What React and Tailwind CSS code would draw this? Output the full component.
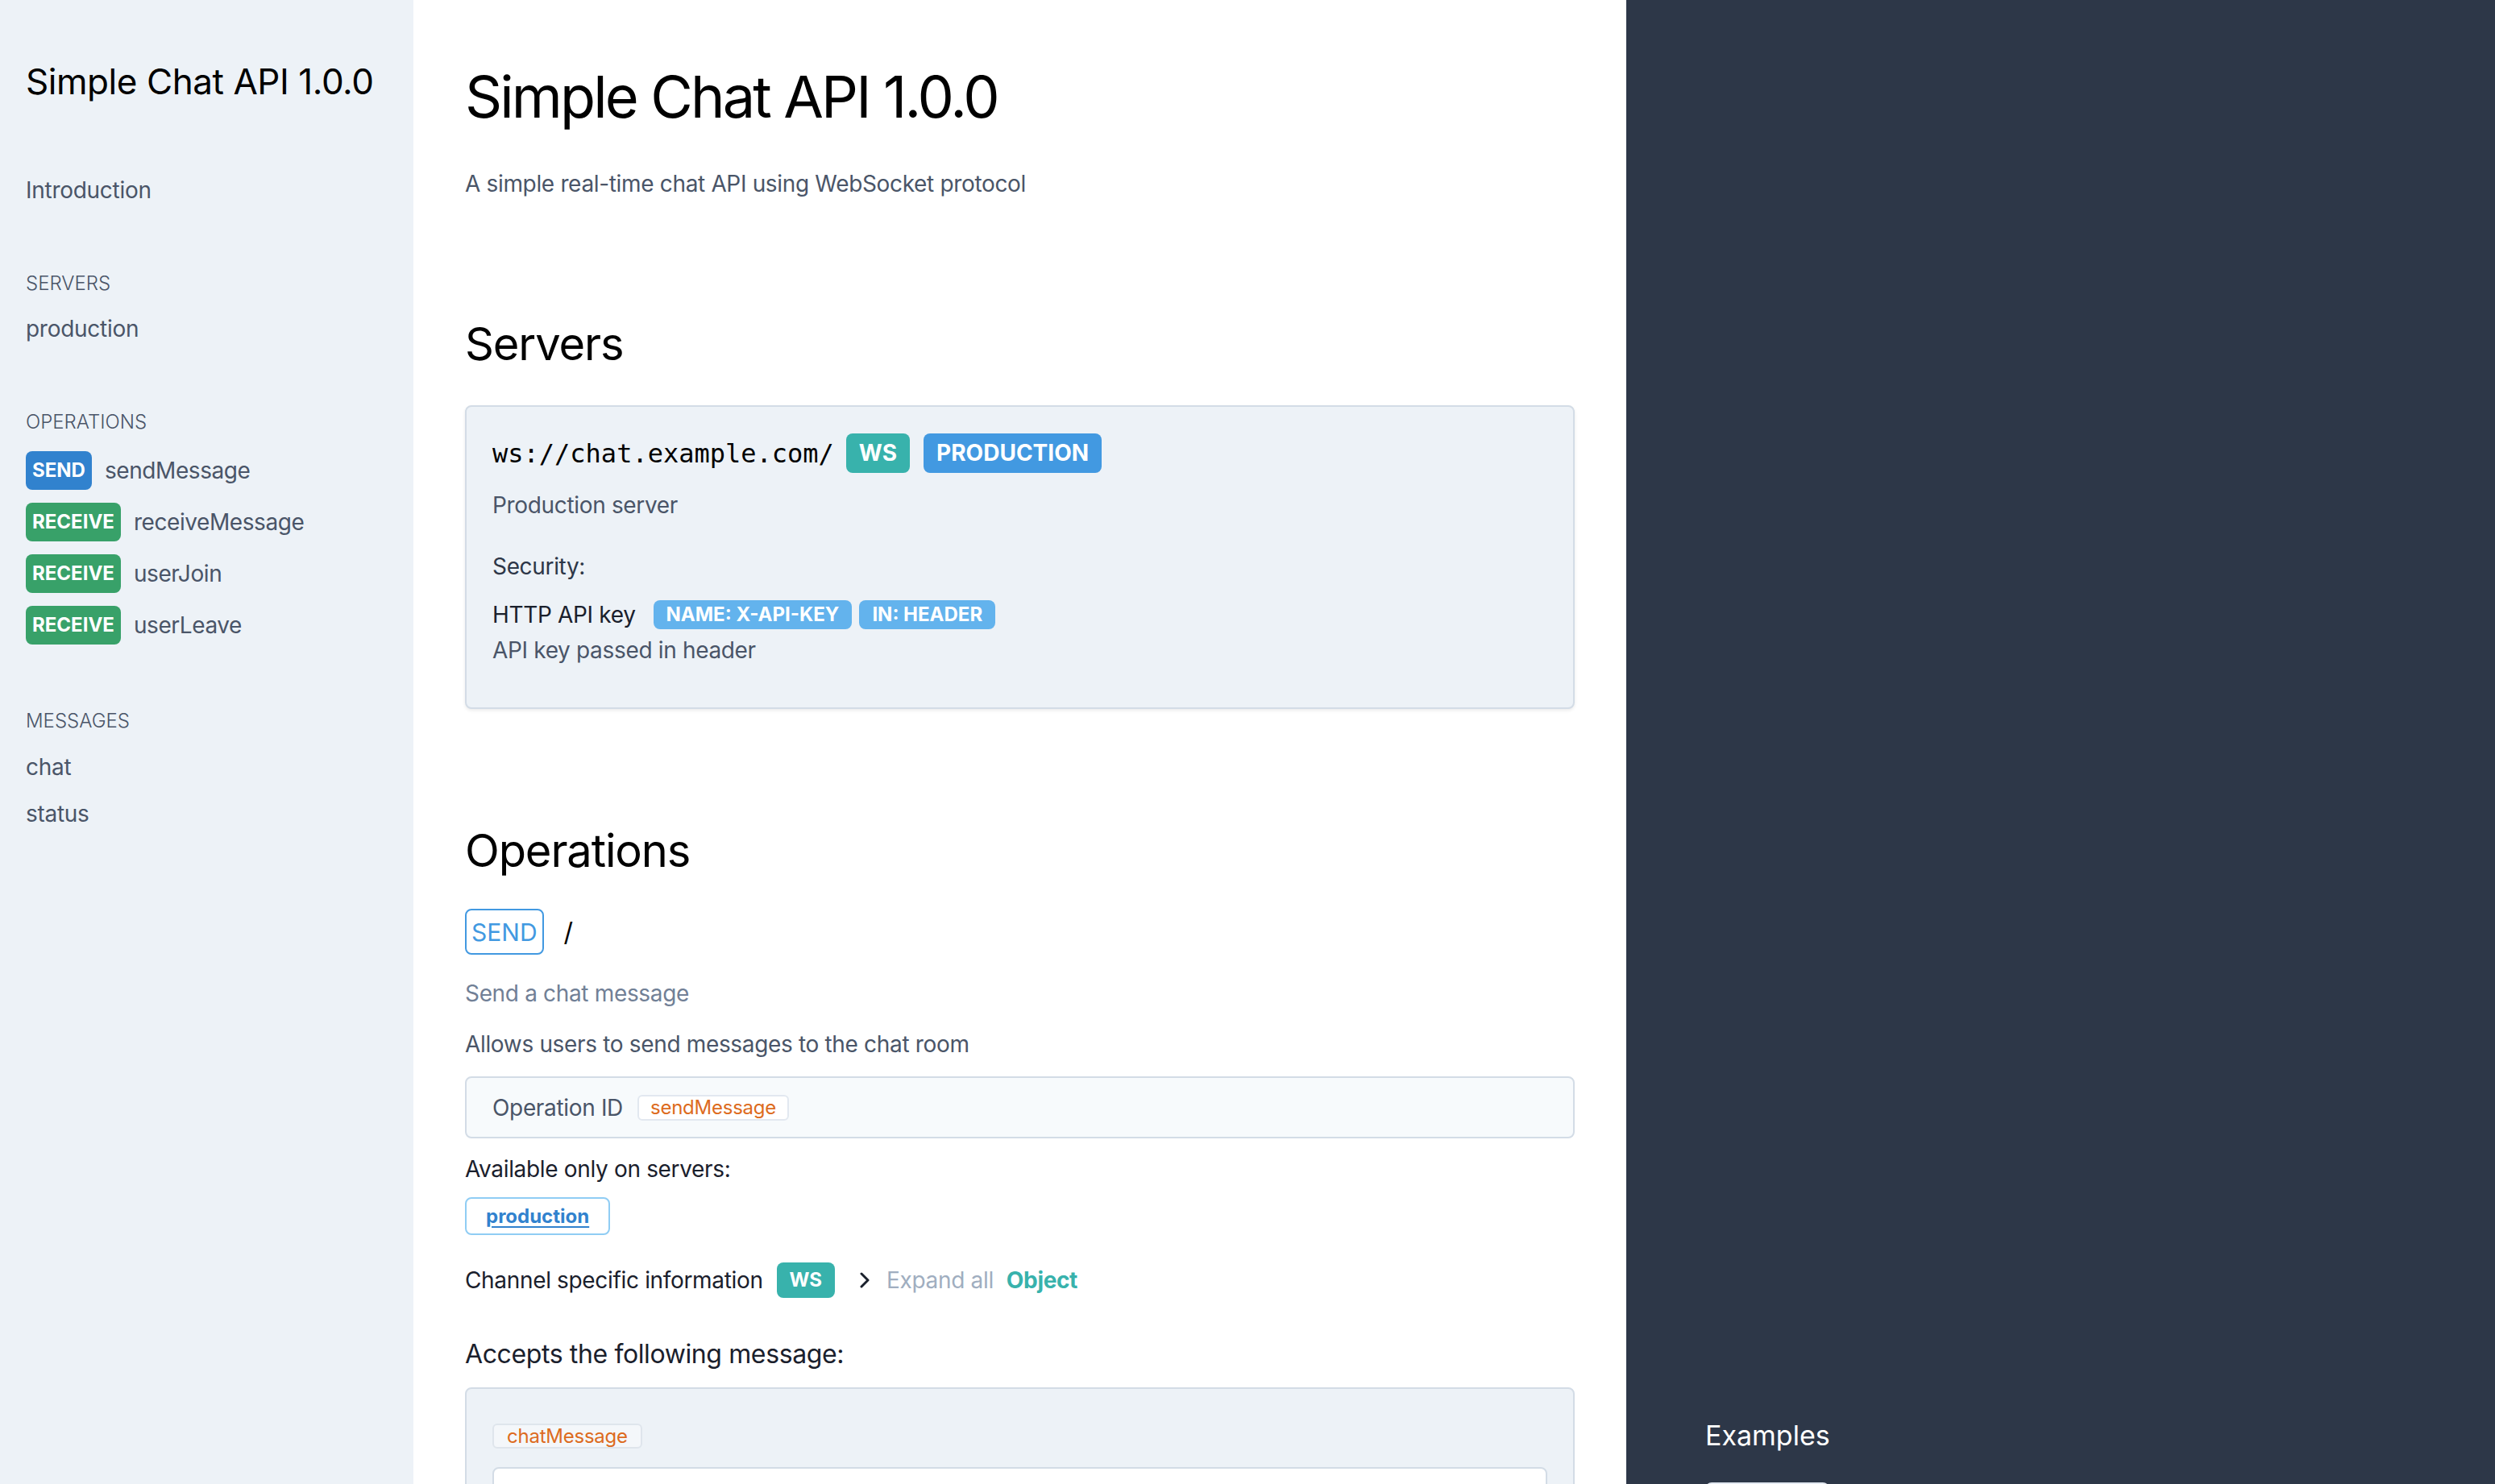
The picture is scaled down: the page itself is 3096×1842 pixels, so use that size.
export default function App() {
  const sideItem = "text-[28px] leading-[40px] tracking-[-0.01em] text-[#4a5568]";
  const sideHead = "text-[24px] leading-[32px] font-light uppercase text-[#4a5568]";
  const ops = [
    { kind: "SEND", name: "sendMessage" },
    { kind: "RECEIVE", name: "receiveMessage" },
    { kind: "RECEIVE", name: "userJoin" },
    { kind: "RECEIVE", name: "userLeave" },
  ];
  const body = "text-[28px] leading-[40px] tracking-[-0.012em]";
  return (
    <div className="flex h-[1842px] w-[3096px] overflow-hidden font-['Inter',sans-serif] antialiased">
      {/* Sidebar */}
      <aside className="w-[513px] shrink-0 bg-[#edf2f7] px-8 pt-[73px]">
        <div className="text-[44px] leading-[56px] tracking-[-0.01em] text-black">Simple Chat API 1.0.0</div>
        <div className={`mt-[87px] ${sideItem}`}>Introduction</div>
        <div className={`mt-[80px] ${sideHead}`}>Servers</div>
        <div className={`mt-[20px] ${sideItem}`}>production</div>
        <div className={`mt-[80px] ${sideHead}`}>Operations</div>
        <ul className="mt-[20px] flex flex-col gap-4">
          {ops.map((o) => (
            <li key={o.name} className="flex h-[48px] items-center">
              <span
                className={`rounded-lg px-2 text-[24px] font-bold leading-[48px] text-white ${
                  o.kind === "SEND" ? "bg-[#3182ce]" : "bg-[#38a169]"
                }`}
              >
                {o.kind}
              </span>
              <span className="ml-4 text-[28px] leading-[40px] tracking-[-0.015em] text-[#4a5568]">{o.name}</span>
            </li>
          ))}
        </ul>
        <div className={`mt-[79px] ${sideHead}`}>Messages</div>
        <div className={`mt-[21px] ${sideItem}`}>chat</div>
        <div className={`mt-[18px] ${sideItem}`}>status</div>
      </aside>

      {/* Main */}
      <main className="w-[1505px] shrink-0 bg-white px-16 pt-[80px]">
        <h1 className="text-[72px] leading-[80px] tracking-[-0.04em] text-black">Simple Chat API 1.0.0</h1>
        <p className={`mt-[48px] ${body} text-[#4a5568]`}>
          A simple real-time chat API using WebSocket protocol
        </p>

        <h2 className="mt-[147px] text-[56px] leading-[64px] tracking-[-0.02em] text-black">Servers</h2>
        <div className="mt-[44px] rounded-lg border-2 border-[#d3dce6] bg-[#edf2f7] px-[32px] pb-[51px] pt-[33px] shadow-[0_2px_4px_rgba(0,0,0,0.08)]">
          <div className="flex items-center">
            <span className="font-['DejaVu_Sans_Mono',monospace] text-[32px] leading-[40px] text-black">
              ws://chat.example.com/
            </span>
            <span className="ml-[15px] rounded-lg bg-[#38b2ac] px-4 py-2 text-[28px] font-bold leading-[33px] text-white">
              WS
            </span>
            <span className="ml-[17px] rounded-lg bg-[#4299e1] px-4 py-2 text-[28px] font-bold leading-[33px] text-white">
              PRODUCTION
            </span>
          </div>
          <div className={`mt-[20px] ${body} text-[#4a5568]`}>Production server</div>
          <div className={`mt-[36px] ${body} text-[#2d3748]`}>Security:</div>
          <div className="mt-[22px] flex h-[36px] items-center">
            <span className="text-[28px] leading-[36px] tracking-[-0.012em] text-[#1a202c]">HTTP API key</span>
            <span className="ml-[22px] rounded-lg bg-[#63b3ed] px-4 text-[24px] font-bold leading-[36px] text-white">
              NAME: X-API-KEY
            </span>
            <span className="ml-[9px] rounded-lg bg-[#63b3ed] px-4 text-[24px] font-bold leading-[36px] text-white">
              IN: HEADER
            </span>
          </div>
          <div className={`mt-[6px] ${body} text-[#4a5568]`}>API key passed in header</div>
        </div>

        <h2 className="mt-[144px] text-[56px] leading-[64px] tracking-[-0.02em] text-black">Operations</h2>
        <div className="mt-[40px] flex h-[57px] items-center">
          <span className="flex h-[57px] items-center rounded-lg border-2 border-[#4299e1] px-[6px] text-[30px] leading-[40px] text-[#4299e1]">
            SEND
          </span>
          <span className="ml-[25px] text-[32px] leading-[40px] text-black">/</span>
        </div>
        <div className={`mt-[28px] ${body} text-[#718096]`}>Send a chat message</div>
        <div className={`mt-[23px] ${body} text-[#4a5568]`}>Allows users to send messages to the chat room</div>
        <div className="mt-[20px] flex h-[77px] items-center rounded-lg border-2 border-[#d3dce6] bg-[#f7fafc] px-[32px]">
          <span className={`${body} text-[#4a5568]`}>Operation ID</span>
          <span className="ml-[18px] rounded-md border-2 border-[#e2e8f0] bg-white px-[14px] text-[24px] leading-[28px] tracking-[-0.01em] text-[#dd6b20]">
            sendMessage
          </span>
        </div>
        <div className={`mt-[18px] ${body} text-[#1a202c]`}>Available only on servers:</div>
        <div className="mt-[15px] flex">
          <span className="rounded-lg border-2 border-[#90cdf4] bg-white px-[24px] py-[5px] text-[24px] font-bold leading-[33px] text-[#3182ce] underline decoration-2 underline-offset-4">
            production
          </span>
        </div>
        <div className="mt-[34px] flex h-[44px] items-center">
          <span className={`${body} text-[#1a202c]`}>Channel specific information</span>
          <span className="ml-[17px] rounded-lg bg-[#38b2ac] px-4 text-[24px] font-bold leading-[44px] text-white">
            WS
          </span>
          <svg className="ml-[30px]" width="14" height="20" viewBox="0 0 14 20" fill="none">
            <path d="M3 2 L11 10 L3 18" stroke="#1a202c" strokeWidth="3" strokeLinecap="round" strokeLinejoin="round" />
          </svg>
          <span className={`ml-[20px] ${body} text-[#a0aec0]`}>Expand all</span>
          <span className={`ml-[16px] ${body} font-bold text-[#38b2ac]`}>Object</span>
        </div>
        <div className="mt-[50px] text-[32px] leading-[40px] tracking-[-0.012em] text-[#1a202c]">
          Accepts the following message:
        </div>
        <div className="mt-[21px] h-[400px] rounded-lg border-2 border-[#d3dce6] bg-[#edf2f7] px-[32px] pt-[43px]">
          <div className="flex">
            <span className="rounded-md border-2 border-[#dfe5ec] bg-[#f4f7fa] px-[16px] text-[24px] leading-[27px] tracking-[-0.01em] text-[#dd6b20]">
              chatMessage
            </span>
          </div>
          <div className="mt-[23px] h-[300px] rounded-lg border-2 border-[#d3dce6] bg-white" />
        </div>
      </main>

      {/* Right panel */}
      <section className="flex-1 bg-[#2d3748] pl-[98px] pt-[1762px]">
        <div className="text-[34px] leading-[40px] text-white">Examples</div>
        <div className="mt-[38px] h-[40px] w-[154px] rounded-t-lg bg-[#e2e8f0]" />
      </section>
    </div>
  );
}
